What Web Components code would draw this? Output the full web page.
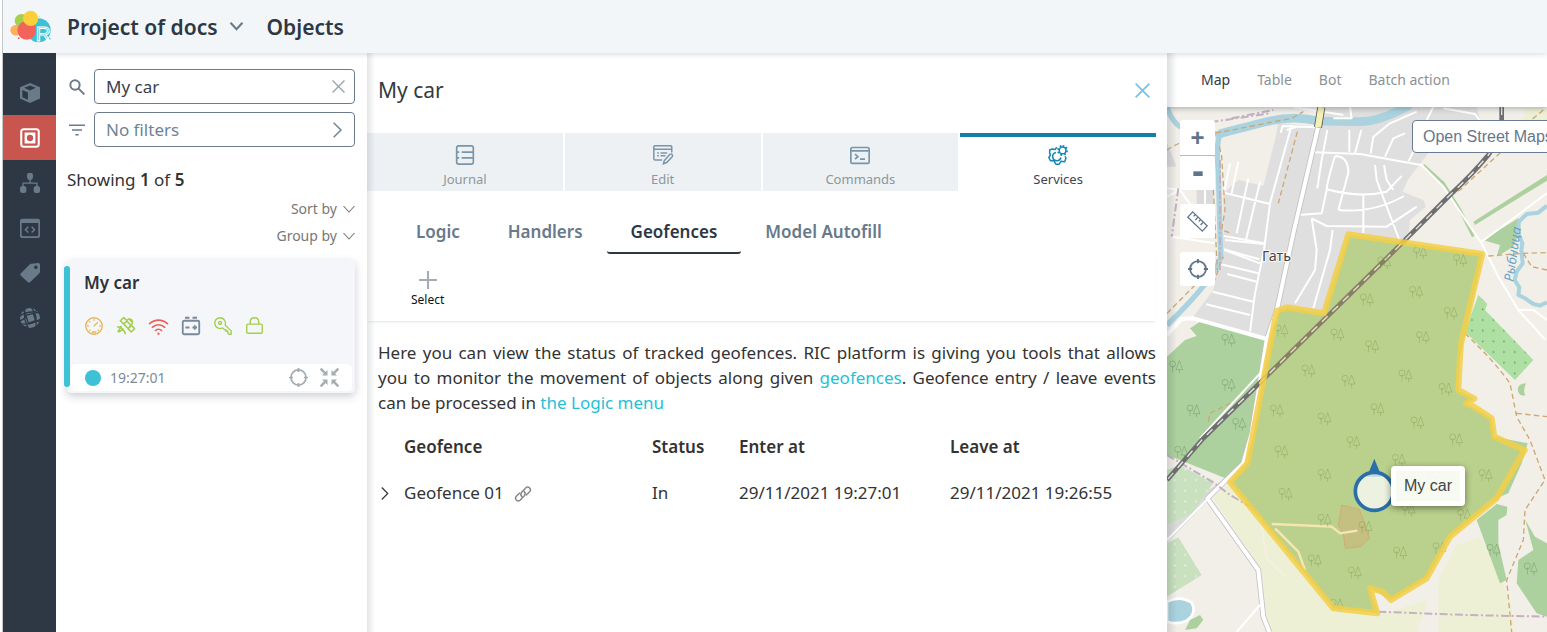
<!DOCTYPE html>
<html lang="en">
<head>
<meta charset="utf-8">
<meta name="viewport" content="width=device-width, initial-scale=1">
<title>Project of docs - Objects</title>
<style>
  html, body {
    height: 100%;
    margin: 0;
  }

  body {
    --ink: #333a41;
    --muted: #6b7b8c;
    --pale: #a3adb2;
    --teal: #3ec1d5;
    --bar: #f3f6f9;
    font-family: "Noto Sans", "Open Sans", sans-serif;
    font-size: 17px;
    color: var(--ink);
    background: #fff;
  }
</style>
</head>
<body>
<ric-app></ric-app>

<script>
const ICONS = {
  cube: '<path fill="currentColor" fill-rule="evenodd" d="M12 0 24 5v13.500L12 24 0 18.500V5zM12 3 5 5.800 12 9l7-3.200zM2.800 8.500v8.700L9.500 20v-8.600z"/>',
  object: '<rect x="1.500" y="1.500" width="21" height="21" rx="3" fill="none" stroke="currentColor" stroke-width="2.500"/><path fill="currentColor" fill-rule="evenodd" d="M5.500 5.500h13v13h-13zM12 8.200a3.800 3.800 0 1 0 0 7.600 3.800 3.800 0 0 0 0-7.600z"/>',
  tree: '<g fill="currentColor"><path d="M8.500 2.200Q8.500 0 10.500 0h3q2 0 2 2.200v3q0 2-2.200 3.300H10.700Q8.500 7.200 8.500 5.200z"/><path d="M11.200 8h1.600v3.300h7.400q1 0 1 1V16h-1.600v-3H4.400v3H2.800v-3.700q0-1 1-1h7.400z"/><rect y="15.500" width="7.600" height="8.500" rx="3"/><rect x="16.400" y="15.500" width="7.600" height="8.500" rx="3"/></g>',
  code: '<path fill="currentColor" fill-rule="evenodd" d="M2.500 1h19Q24 1 24 3.500v18q0 2.500-2.500 2.500h-19Q0 24 0 21.500v-18Q0 1 2.500 1zM2 6v14.500Q2 22 3.500 22h17q1.500 0 1.500-1.500V6z"/><path fill="none" stroke="currentColor" stroke-width="1.800" d="M10 10.500 6.500 14l3.500 3.500M14 10.500l3.500 3.500-3.500 3.500"/>',
  tag: '<path fill="currentColor" fill-rule="evenodd" d="M13.500 1 22 0q2 0 2 2v8.500q0 1-.8 1.800L12 23q-1.200 1-2.400 0L.8 15q-1.200-1.200 0-2.400L12 1.600zM19 3a2.200 2.200 0 1 0 0 4.400A2.200 2.200 0 0 0 19 3z"/>',
  ball: '<circle cx="12" cy="12" r="12" fill="currentColor"/><g fill="none" stroke="#2d3844" stroke-width="1.600"><path d="M0 9.500Q10 2.500 23 6M1 19Q14 21 24 13.500M6 1Q3.500 13 10 24M14 0Q21.500 9 19 23M-1 15.500Q4 15 7.500 8.500L4 3M8 8.500 16 6.500 21 2M16 6.500 18.500 15l6 1M18.500 15 10 18.500 6 24M10 18.500 7 9"/></g>',
  search: '<g fill="none" stroke="currentColor" stroke-width="3"><circle cx="9" cy="9" r="7"/><path d="M14 14l9 9"/></g>',
  filter: '<path stroke="currentColor" stroke-width="2.200" d="M0 5h24M4.500 12h15M9.500 19h5"/>',
  close: '<path fill="none" stroke="currentColor" stroke-width="2.600" d="M1 1l22 22M23 1 1 23"/>',
  right: '<path fill="none" stroke="currentColor" stroke-width="2.200" d="M7 1l11 11L7 23"/>',
  down: '<path fill="none" stroke="currentColor" stroke-width="2.200" d="M1 6l11 12L23 6"/>',
  chevron: '<path fill="none" stroke="currentColor" stroke-width="4" d="M1 5l11 12L23 5"/>',
  gauge: '<g fill="none" stroke="currentColor" stroke-width="1.800"><circle cx="12" cy="12" r="11"/><path d="M11.500 12.500 17 7M12 3v2M3 12h2M21 12h-2M5.600 5.600 7 7M5.600 18.400 7 17M18.400 18.400 17 17M9 20h6"/></g>',
  satellite: '<g fill="none" stroke="currentColor" stroke-width="2" stroke-linejoin="round"><path d="M9 .8 13.500 5 9 9.500 4.500 5zM19 11l4.500 4.500L19 20l-4.500-4.500zM13 4.500l3-2 5 5-2 3.500M16 2.500q4.500 0 5 5M8.500 9l6.500 6.500 4-4L12.500 5M0 13q8 0 11.500 10M6 12l-5 8M2 20l7-4"/></g>',
  wifi: '<g fill="none" stroke="currentColor" stroke-width="2"><path d="M0 9Q12-1 24 9M3.500 13.500q8.500-7.500 17 0M7.500 17.500q4.500-4 9 0"/></g><circle cx="12" cy="21" r="1.500" fill="currentColor"/>',
  battery: '<g fill="none" stroke="currentColor" stroke-width="2.400"><rect x="1" y="5" width="22" height="18" rx="2"/><path d="M4 1h6M14 1h6M4.500 14H10M14 14h6M17 11v6"/></g>',
  key: '<g fill="none" stroke="currentColor" stroke-width="1.800" stroke-linejoin="round"><path d="M15 11q1-3-.5-6Q12 1 8 1 1 2 1 8.500 2 15 8.500 15.500l3-1L14 17h2v2h2.500v3L20 23h3v-4.500z"/><circle cx="8" cy="8" r="2"/></g>',
  lock: '<g fill="none" stroke="currentColor" stroke-width="2"><rect x="1" y="10" width="22" height="13" rx="2"/><path d="M6 10V7q0-6 6-6t6 6v3"/></g>',
  target: '<g fill="none" stroke="currentColor" stroke-width="2.200"><circle cx="12" cy="12" r="9.500"/><path d="M12 0v5M12 19v5M0 12h5M19 12h5"/></g>',
  shrink: '<g fill="none" stroke="currentColor" stroke-width="3"><path d="M.8.800 7 7M23.200.800 17 7M.8 23.200 7 17M23.200 23.200 17 17"/></g><g fill="currentColor"><path d="M9.500 2.500v7h-7zM14.500 2.500v7h7zM9.500 21.500v-7h-7zM14.500 21.500v-7h7z"/></g>',
  journal: '<g fill="none" stroke="currentColor" stroke-width="2"><rect x="2" y="1" width="20" height="22" rx="2.500"/><path d="M2 8.500h3M8 8.500h14M2 15.500h3M8 15.500h14"/></g>',
  edit: '<g fill="none" stroke="currentColor" stroke-width="1.800"><path d="M22.500 9V2.500q0-1.500-1.500-1.500H2.500Q1 1 1 2.500v14Q1 18 2.500 18H11M1 5h21.500M5 9.500h2M9 9.500h8M5 13h2M9 13h6"/><path d="M13.500 19 20 11.500q1.500-1.500 3 0 1 1.500 0 2.700L16.500 21 12.500 22.500z"/></g>',
  terminal: '<g fill="none" stroke="currentColor" stroke-width="2"><rect x="1" y="3" width="22" height="19" rx="2"/><path d="M1 7h22M6 11l3.500 3L6 17M12 17h6"/></g>',
  gears: '<g fill="none" stroke="currentColor" stroke-width="1.800"><path stroke-linejoin="round" d="M10.500 2.500 8.500 5.500 5 4.800 2 6v4l1 2-2 3 2 4 4-.3L9.500 23h4l2-3.500 4.500.5 1.500-4-1-2.500"/><path d="M9.500 9A5 5 0 1 0 15.500 15"/><circle cx="17.500" cy="6.500" r="4"/><path stroke-dasharray="2 2.320" stroke-width="2.200" d="M17.500 1a5.500 5.500 0 1 1-.1 0"/></g>',
  plus: '<path stroke="currentColor" stroke-width="2.800" d="M12 0v24M0 12h24"/>',
  minus: '<path stroke="currentColor" stroke-width="7" d="M5 13h14"/>',
  link: '<g fill="none" stroke="currentColor" stroke-width="2.200" stroke-linecap="round"><path d="M10.500 16q-3.500-3-.5-6.500L16 3q3-3 6 0 2.500 3 0 5.500L17 13.500"/><path d="M13.500 8q3.500 3 .5 6.500L8 21q-3 3-6 0-2.500-3 0-5.500L7 10.500"/></g>',
  ruler: '<g fill="none" stroke="currentColor" stroke-width="1.500"><path d="M6.500 1 23 17l-5.500 6L1 7zM9.500 4 7.500 6.200M12.500 7l-3 3.300M15.500 9.800l-2 2.200M18.500 12.700l-3 3.300"/></g>'
};

class UiIcon extends HTMLElement {
  constructor() {
    super();
    this.attachShadow({ mode: 'open' });
  }

  connectedCallback() {
    const size = this.getAttribute('size') || '20';
    this.shadowRoot.innerHTML = `
      <style>
        :host { display: inline-flex; flex: none; }
        svg { display: block; overflow: visible; }
      </style>
      <svg width="${size}" height="${size}" viewBox="0 0 24 24" aria-hidden="true">${ICONS[this.getAttribute('name')]}</svg>
    `;
  }
}
customElements.define('ui-icon', UiIcon);

class AppHeader extends HTMLElement {
  constructor() {
    super();
    this.attachShadow({ mode: 'open' });
    this.shadowRoot.innerHTML = `
      <style>
        :host {
          display: flex;
          align-items: center;
          height: 53px;
          padding: 0 7px;
          background: var(--bar);
          box-shadow: 0 1px 6px rgba(45, 56, 68, .2);
          position: relative;
          z-index: 3;
        }
        svg { width: 41px; height: 33px; overflow: visible; }
        button, h1 {
          font-family: inherit;
          font-size: 21px;
          line-height: 32px;
          font-weight: 600;
          color: #2d3844;
          margin: 0;
        }
        button {
          display: flex;
          align-items: center;
          gap: 12px;
          margin: 0 24px 0 16px;
          padding: 0;
          border: 0;
          background: none;
        }
        ui-icon { color: var(--muted); }
      </style>
      <svg viewBox="28 31 123 99" role="img" aria-label="RIC">
        <circle cx="114" cy="92" r="36" fill="#3ec1d5"/>
        <circle cx="45" cy="92" r="16" fill="#fbb15c"/>
        <circle cx="62" cy="63" r="20" fill="#a5cf4f"/>
        <circle cx="78" cy="92" r="28" fill="#f1635b"/>
        <circle cx="90" cy="56" r="23" fill="#fdd039"/>
        <circle cx="116" cy="50" r="2" fill="#fdd039"/>
        <circle cx="54" cy="116" r="3" fill="#f1635b"/>
        <circle cx="147" cy="117" r="3" fill="#3ec1d5"/>
        <text x="105" y="125" font-family="Liberation Sans, sans-serif" font-size="62" fill="none" stroke="#fff" stroke-width="3">R</text>
      </svg>
      <button type="button">Project of docs <ui-icon name="chevron" size="13"></ui-icon></button>
      <h1>Objects</h1>
    `;
  }
}
customElements.define('app-header', AppHeader);

class SideNav extends HTMLElement {
  constructor() {
    super();
    this.attachShadow({ mode: 'open' });
    const items = [
      ['cube', 'Models'], ['object', 'Objects'], ['tree', 'Structure'],
      ['code', 'Code'], ['tag', 'Tags'], ['ball', 'Geofences']
    ];
    this.shadowRoot.innerHTML = `
      <style>
        :host {
          display: block;
          width: 53px;
          background: #2d3844;
        }
        nav {
          display: flex;
          flex-direction: column;
          padding-top: 17px;
        }
        a {
          display: flex;
          align-items: center;
          justify-content: center;
          height: 45px;
          color: #6b7a89;
        }
        a.active {
          background: #c9554f;
          color: #fff;
        }
      </style>
      <nav>
        ${items.map(([icon, label]) => `<a href="#${icon}" aria-label="${label}"${icon === 'object' ? ' class="active"' : ''}><ui-icon name="${icon}" size="20"></ui-icon></a>`).join('')}
      </nav>
    `;
  }
}
customElements.define('side-nav', SideNav);

class ObjectCard extends HTMLElement {
  constructor() {
    super();
    this.attachShadow({ mode: 'open' });
    this.shadowRoot.innerHTML = `
      <style>
        :host {
          display: block;
          margin-left: 11px;
          border-radius: 4px;
          background: #f5f6f9;
          box-shadow: 0 3px 9px rgba(45, 56, 68, .25);
          position: relative;
        }
        :host::before {
          content: "";
          position: absolute;
          left: -3px;
          top: 6px;
          bottom: 6px;
          width: 6px;
          border-radius: 3px;
          background: var(--teal);
        }
        h2 {
          margin: 0;
          padding: 11px 17px 0;
          font-size: 17px;
          line-height: 24px;
          font-weight: 600;
          color: #2d3239;
        }
        .status {
          display: flex;
          gap: 14px;
          padding: 22px 18px 28px;
        }
        .foot {
          display: flex;
          align-items: center;
          height: 27px;
          margin: 0 3px 0 4px;
          padding: 0 13px 0 14px;
          border-radius: 5px;
          background: #fff;
          border-bottom: 2px solid #f5f6f9;
        }
        .dot {
          width: 16px;
          height: 16px;
          margin-right: 9px;
          border-radius: 50%;
          background: var(--teal);
        }
        time {
          flex: 1;
          font-size: 14px;
          color: #7b8b95;
        }
        button {
          display: flex;
          margin-left: 12px;
          padding: 0;
          border: 0;
          background: none;
          color: var(--pale);
        }
      </style>
      <h2><slot name="title"></slot></h2>
      <div class="status">
        <ui-icon name="gauge" size="18" style="color:#eab354"></ui-icon>
        <ui-icon name="satellite" size="18" style="color:#a3cf4e"></ui-icon>
        <ui-icon name="wifi" size="19" style="color:#ea6055"></ui-icon>
        <ui-icon name="battery" size="18" style="color:#77899b"></ui-icon>
        <ui-icon name="key" size="18" style="color:#a3cf4e"></ui-icon>
        <ui-icon name="lock" size="17" style="color:#a3cf4e"></ui-icon>
      </div>
      <div class="foot">
        <span class="dot"></span>
        <time><slot name="time"></slot></time>
        <button type="button" aria-label="Show on map"><ui-icon name="target" size="19"></ui-icon></button>
        <button type="button" aria-label="Collapse"><ui-icon name="shrink" size="19"></ui-icon></button>
      </div>
    `;
  }
}
customElements.define('object-card', ObjectCard);

class ObjectList extends HTMLElement {
  constructor() {
    super();
    this.attachShadow({ mode: 'open' });
    this.shadowRoot.innerHTML = `
      <style>
        :host {
          display: block;
          padding: 16px 12px 0 0;
          box-sizing: border-box;
        }
        .row {
          display: flex;
          align-items: center;
          margin: 0 0 8px 13px;
        }
        .row > label, .row > ui-icon {
          display: flex;
          width: 25px;
          color: var(--muted);
        }
        .field {
          flex: 1;
          display: flex;
          align-items: center;
          justify-content: space-between;
          min-width: 0;
          height: 35px;
          box-sizing: border-box;
          padding: 0 9px 0 11px;
          border: 1px solid var(--muted);
          border-radius: 4px;
          background: #fff;
          font-family: inherit;
          font-size: 17px;
          line-height: 24px;
          color: #6d8496;
        }
        input {
          flex: 1;
          min-width: 0;
          padding: 0;
          border: 0;
          outline: 0;
          background: none;
          font: inherit;
          color: #39414b;
        }
        .clear {
          display: flex;
          padding: 0;
          border: 0;
          background: none;
          color: #9aa7ac;
        }
        p {
          margin: 21px 0 3px 11px;
          font-size: 17px;
          line-height: 24px;
          color: #333;
        }
        b { font-weight: 600; }
        .sort {
          display: flex;
          flex-direction: column;
          align-items: flex-end;
          margin-bottom: 11px;
        }
        .sort button {
          display: flex;
          align-items: center;
          gap: 6px;
          height: 27px;
          padding: 0;
          border: 0;
          background: none;
          font-family: inherit;
          font-size: 14px;
          line-height: 20px;
          color: #777;
        }
      </style>
      <div class="row">
        <label for="search" aria-label="Search"><ui-icon name="search" size="16"></ui-icon></label>
        <div class="field">
          <input id="search" type="text" value="My car">
          <button class="clear" type="button" aria-label="Clear"><ui-icon name="close" size="13"></ui-icon></button>
        </div>
      </div>
      <div class="row">
        <ui-icon name="filter" size="16"></ui-icon>
        <button class="field" type="button">No filters <ui-icon name="right" size="16"></ui-icon></button>
      </div>
      <p>Showing <b>1</b> of <b>5</b></p>
      <div class="sort">
        <button type="button">Sort by <ui-icon name="down" size="12"></ui-icon></button>
        <button type="button">Group by <ui-icon name="down" size="12"></ui-icon></button>
      </div>
      <slot></slot>
    `;
  }
}
customElements.define('object-list', ObjectList);

class TabButton extends HTMLElement {
  constructor() {
    super();
    this.attachShadow({ mode: 'open' });
  }

  connectedCallback() {
    this.shadowRoot.innerHTML = `
      <style>
        :host { display: block; }
        button {
          display: flex;
          flex-direction: column;
          align-items: center;
          gap: 5px;
          width: 100%;
          height: 58px;
          padding: 8px 0 0;
          border: 0;
          border-top: 4px solid #edf1f4;
          background: #edf1f4;
          font-family: inherit;
          font-size: 13px;
          line-height: 18px;
          color: #8a979d;
        }
        ui-icon { color: #7896aa; }
        :host([active]) button {
          background: #fff;
          border-color: #127ea9;
          color: #3c4650;
        }
        :host([active]) ui-icon { color: #1189b4; }
      </style>
      <button type="button" role="tab" aria-selected="${this.hasAttribute('active')}">
        <ui-icon name="${this.getAttribute('icon')}" size="20"></ui-icon>
        <slot></slot>
      </button>
    `;
  }
}
customElements.define('tab-button', TabButton);

class GeofenceTable extends HTMLElement {
  constructor() {
    super();
    this.attachShadow({ mode: 'open' });
    this.shadowRoot.innerHTML = `
      <style>
        :host { display: block; }
        table {
          width: 100%;
          border-collapse: collapse;
          table-layout: fixed;
          font-size: 17px;
          line-height: 24px;
          color: #333;
        }
        th, td {
          height: 46px;
          padding: 0;
          text-align: left;
          font-weight: 400;
        }
        th { font-weight: 600; }
        .toggle { width: 26px; }
        .name { width: 248px; }
        .state { width: 87px; }
        .enter { width: 211px; }
        button {
          display: flex;
          padding: 0;
          border: 0;
          background: none;
          color: #333;
        }
        a {
          display: inline-flex;
          margin-left: 7px;
          vertical-align: middle;
          color: #888;
        }
      </style>
      <table>
        <thead>
          <tr>
            <th class="toggle"></th>
            <th class="name">Geofence</th>
            <th class="state">Status</th>
            <th class="enter">Enter at</th>
            <th>Leave at</th>
          </tr>
        </thead>
        <tbody>
          <tr>
            <td><button type="button" aria-label="Expand"><ui-icon name="right" size="13"></ui-icon></button></td>
            <td>Geofence 01 <a href="#geofence-01" aria-label="Open geofence"><ui-icon name="link" size="16"></ui-icon></a></td>
            <td>In</td>
            <td>29/11/2021 19:27:01</td>
            <td>29/11/2021 19:26:55</td>
          </tr>
        </tbody>
      </table>
    `;
  }
}
customElements.define('geofence-table', GeofenceTable);

class DetailPanel extends HTMLElement {
  constructor() {
    super();
    this.attachShadow({ mode: 'open' });
    this.shadowRoot.innerHTML = `
      <style>
        :host {
          display: block;
          padding-right: 11px;
          position: relative;
          box-sizing: border-box;
        }
        :host::before {
          content: "";
          position: absolute;
          inset: 0 auto 0 0;
          width: 8px;
          background: linear-gradient(to right, rgba(45, 56, 68, .13), rgba(45, 56, 68, 0));
        }
        .title {
          display: flex;
          align-items: center;
          justify-content: space-between;
          height: 80px;
          padding: 0 6px 6px 11px;
          box-sizing: border-box;
        }
        h2 {
          margin: 0;
          font-size: 21px;
          line-height: 32px;
          font-weight: 400;
        }
        button {
          padding: 0;
          border: 0;
          background: none;
          font-family: inherit;
        }
        .close { display: flex; color: #6fc3e8; }
        .tabs {
          display: grid;
          grid-template-columns: repeat(4, 1fr);
          gap: 2px;
        }
        .subtabs {
          display: flex;
          padding: 21px 25px 0;
        }
        .subtabs button {
          height: 42px;
          padding: 0 24px;
          border-bottom: 2px solid transparent;
          border-radius: 3px;
          font-size: 17px;
          line-height: 24px;
          font-weight: 600;
          color: #68798a;
        }
        .subtabs .active {
          border-color: #2d3844;
          color: #2d3844;
        }
        .tools {
          display: flex;
          height: 67px;
          padding: 0 44px;
          box-sizing: border-box;
          box-shadow: 0 2px 2px -1px rgba(45, 56, 68, .14);
        }
        .tools button {
          display: flex;
          flex-direction: column;
          align-items: center;
          gap: 2px;
          padding-top: 17px;
          font-size: 12px;
          line-height: 18px;
          color: #111;
        }
        .tools ui-icon { color: var(--pale); }
        p {
          margin: 19px 0 9px 11px;
          font-size: 17px;
          line-height: 25px;
          text-align: justify;
          color: #333;
        }
        a {
          color: #25bfd6;
          text-decoration: none;
        }
        geofence-table { margin-left: 11px; }
      </style>
      <div class="title">
        <h2>My car</h2>
        <button class="close" type="button" aria-label="Close"><ui-icon name="close" size="15"></ui-icon></button>
      </div>
      <div class="tabs" role="tablist">
        <tab-button icon="journal">Journal</tab-button>
        <tab-button icon="edit">Edit</tab-button>
        <tab-button icon="terminal">Commands</tab-button>
        <tab-button icon="gears" active>Services</tab-button>
      </div>
      <div class="subtabs">
        <button type="button">Logic</button>
        <button type="button">Handlers</button>
        <button type="button" class="active">Geofences</button>
        <button type="button">Model Autofill</button>
      </div>
      <div class="tools">
        <button type="button"><ui-icon name="plus" size="18"></ui-icon>Select</button>
      </div>
      <p>Here you can view the status of tracked geofences. RIC platform is giving you tools that allows you to monitor the movement of objects along given <a href="#geofences">geofences</a>. Geofence entry / leave events can be processed in <a href="#logic">the Logic menu</a></p>
      <geofence-table></geofence-table>
    `;
  }
}
customElements.define('detail-panel', DetailPanel);

// positions of the wood symbols on the map
const TREES = [
  [780, 608], [900, 631], [672, 638], [768, 726], [620, 749], [872, 789], [532, 854], [788, 862], [636, 889],
  [364, 842], [445, 962], [736, 977], [565, 993], [856, 1017], [652, 1078], [350, 1082], [493, 1106], [772, 1118],
  [205, 870], [48, 950], [205, 1005], [100, 1082], [237, 1122], [63, 1206], [888, 1169], [580, 1177], [364, 1205],
  [716, 1230], [493, 1275], [976, 1276], [820, 1272], [376, 1332], [912, 1395], [493, 1410], [616, 1432], [745, 1380],
  [720, 1508], [464, 1532], [584, 1568], [530, 1665], [1112, 1556], [1000, 1500], [838, 1495]
];

class MapCanvas extends HTMLElement {
  constructor() {
    super();
    this.attachShadow({ mode: 'open' });
    this.shadowRoot.innerHTML = `
      <style>
        :host { display: block; overflow: hidden; }
        svg { display: block; width: 100%; height: 100%; }
        .road { fill: none; stroke: #fff; stroke-width: 6; stroke-linejoin: round; }
        .main { fill: none; stroke: #fff; stroke-width: 12; stroke-linejoin: round; }
        .casing { fill: none; stroke: #c4c1c0; stroke-width: 17; stroke-linejoin: round; }
        .water { fill: none; stroke: #aad3df; stroke-linejoin: round; }
        .track { fill: none; stroke: #cba872; stroke-width: 4; stroke-dasharray: 16 10; }
        .border { fill: none; stroke: #c3b0c1; stroke-width: 6; stroke-dasharray: 24 8 6 8; }
        .wood { fill: #add19e; }
      </style>
      <svg viewBox="21 171 1140 1575" preserveAspectRatio="xMinYMin slice" role="img" aria-label="Map">
        <defs>
          <g id="wood" fill="none" stroke="#4b7a3f" stroke-opacity=".38" stroke-width="2.500">
            <circle cx="-10" cy="-8" r="9"/>
            <path d="M-10-3v20M10-18 0 9h20zM10 9v11"/>
          </g>
          <pattern id="orchard" width="32" height="32" patternUnits="userSpaceOnUse">
            <rect width="32" height="32" fill="#aedfa3"/><circle cx="8" cy="10" r="2.500" fill="#629b58"/>
          </pattern>
          <pattern id="scrub" width="32" height="32" patternUnits="userSpaceOnUse">
            <rect width="32" height="32" fill="#c9e1bf"/><circle cx="12" cy="10" r="3" fill="#eaf5e2"/>
          </pattern>
        </defs>
        <rect x="21" y="171" width="1140" height="1575" fill="#f2efe9"/>

        <!-- land use -->
        <path fill="#e0dfdf" d="M355 220 475 230 495 171H950L962 212 860 240 800 315 742 392 728 425 790 450 798 470 750 510 742 590 565 550 492 790 350 783 322 870 100 800 160 720 190 560V430L235 390 310 408 345 270z"/>
        <path fill="#dcdbdb" d="M21 280 50 350 21 350zM110 420h50v90h-50zM245 1250 130 1365 21 1480V1400L160 1310z"/>
        <path fill="#edf0d5" d="M210 1300 160 1345 305 1560 325 1746H770L805 1650 655 1695 520 1675zM960 1460 890 1485 835 1590V1746H1060L1055 1670 1030 1600zM1090 171h71v90l-70 30z"/>
        <path class="wood" d="M120 815 322 870 265 1170 245 1250 210 1290 21 1215V920L75 870 110 858 90 835z"/>
        <path class="wood" d="M565 553 968 612 900 920 895 1020 943 1046 918 1060 995 1105 1003 1160 1103 1180 1085 1240 1045 1330 1020 1340 870 1460 800 1585 693 1650 630 1615 655 1690 520 1675 210 1297 262 1240 350 783 380 772 492 790z"/>
        <path class="wood" d="M940 515 1161 375V392L945 525zM968 570 1075 505 1083 540 1060 590 1010 620 1020 585zM950 1410 1010 1362 1042 1370 1040 1395 1015 1410V1480L1040 1590 1020 1600zM1096 1410 1125 1460 1161 1480V1700L1130 1690 1070 1600 1075 1530 1120 1500zM1098 1000q-28 2-24 22 4 18 22 14-8-14 2-36z"/>
        <path fill="url(#orchard)" d="M955 735 982 762 975 780 1120 930 1065 990 915 845z"/>
        <path fill="url(#scrub)" d="M21 1260 60 1245 160 1300 95 1390 21 1425zM21 1480 55 1462 125 1575 21 1640z"/>
        <path fill="#c8a27f" fill-opacity=".45" stroke="#d09a78" stroke-opacity=".8" stroke-width="3" d="M545 1365 598 1378 610 1410 628 1465 602 1490 556 1495 550 1450 535 1425z"/>

        <!-- water -->
        <path class="water" stroke-width="26" d="M750 165Q660 215 600 215T475 213Q400 195 320 215 220 240 178 252"/>
        <path class="water" stroke-width="16" d="M21 165Q25 195 50 222T178 252Q168 300 175 360L182 620Q170 680 21 825"/>
        <path class="water" stroke-width="12" d="M1161 467 1135 488 1100 492 1077 515 1073 545 1087 580 1084 600 1088 640 1070 665 1064 690 1078 712 1075 735 1095 745 1120 762 1140 767 1161 757"/>
        <path fill="#aad3df" stroke="#fff" stroke-width="8" d="M21 1655Q60 1635 95 1658 112 1690 80 1712 50 1725 21 1715z"/>
        <path class="wood" d="M75 1740 90 1710 120 1695 130 1710 110 1735z"/>

        <!-- streets -->
        <path class="road" d="M362 248 368 228 470 232M395 225 330 460 312 600 285 730 270 845M412 230 380 240M550 195 400 171M520 205 575 205 570 171M770 185 690 220 640 260 632 310M820 171 800 210M850 175 945 192 960 212M568 240V305M604 240 585 310M502 240 485 330 472 415M735 250 700 265 675 320M770 285 745 335M210 340 192 428 330 462M235 335 215 430M265 385 230 550M300 395 258 570M192 558 312 580M525 318Q500 400 500 420L485 490 415 495M525 318q40 0 40 50L535 480M500 418Q600 445 680 425L725 378M535 480Q640 490 732 438M455 505 500 528 680 530 770 470M645 345 650 390 680 470 718 570M672 345 680 390 700 420M610 435V550M455 505 470 600 465 660 405 760M518 540 510 600 460 775M193 600 300 640M195 570 310 582M192 598 298 628M183 643 295 670M202 672 290 695M158 725 280 755M138 763 270 795M21 415 60 420 110 490M60 420 21 440M35 560 165 580M135 415V500M1161 430 965 575M965 580 1015 680 1075 780 1155 868M1075 780H1120L1161 810"/>
        <path fill="none" stroke="#add19e" stroke-width="9" d="M790 345 850 400 900 480 940 560"/>
        <path class="road" d="M745 338 785 345 850 410 910 500 965 580"/>
        <path class="road" stroke-width="9" d="M462 307 600 312 745 338"/>
        <path class="casing" d="M475 228 400 550 350 783 320 870 275 1150 250 1240 142 1345 295 1560 310 1700 328 1746"/>
        <path class="main" d="M475 228 400 550 350 783 320 870 275 1150 250 1240 142 1345 295 1560 310 1700 328 1746"/>
        <path class="main" d="M21 855 65 807 100 805 320 867"/>
        <path class="road" d="M300 970 120 1165M150 1340 21 1470M300 1665 230 1746"/>
        <path fill="none" stroke="#f7e9cb" stroke-width="7" d="M335 1422 515 1430 540 1450 592 1442M345 1435 415 1505 435 1560"/>
        <path fill="none" stroke="#f5f0e0" stroke-width="6" d="M300 1400 320 1525 375 1580"/>
        <path fill="none" stroke="#555" stroke-width="24" d="M484 171 474 232"/>
        <path fill="none" stroke="#f6f0b4" stroke-width="19" d="M484 171 474 232"/>

        <!-- tracks and borders -->
        <path class="track" d="M21 300Q80 260 190 245L395 205 430 185M178 290 185 320 195 480 185 540 215 550M412 245 355 460M1150 180 1090 230 1040 290 900 420 870 435M21 790 120 690M160 420 172 660M160 700 190 620M985 618 1090 610 1161 608M1090 610 1115 650 1161 660M915 850Q1000 930 1050 1000L1070 1100 1110 1170 1155 1290 1095 1380 1090 1470 1040 1590 1055 1746M1070 1090 1161 1100M145 1115 150 1090 210 1060"/>
        <path class="border" d="M215 205 340 180M60 230 330 190M55 415 35 560M180 330V660M21 1215 160 1297 210 1335 270 1370M655 1685 920 1695 1161 1700"/>

        <!-- railway -->
        <path fill="none" stroke="#706f6f" stroke-width="14" d="M1025 171V210Q1020 270 985 315 940 370 870 435L700 605 310 988 130 1165 21 1290"/>
        <path fill="none" stroke="#e8e8e8" stroke-width="4" stroke-dasharray="24 20" d="M1025 171V210Q1020 270 985 315 940 370 870 435L700 605 310 988 130 1165 21 1290"/>

        ${TREES.map(([x, y]) => `<use href="#wood" x="${x}" y="${y}"/>`).join('')}

        <text x="306" y="632" font-family="Noto Sans, sans-serif" font-size="43" fill="#444" stroke="#fff" stroke-width="5" paint-order="stroke">Гать</text>
        <text transform="translate(1060 696) rotate(-82)" font-family="Noto Sans, sans-serif" font-style="italic" font-size="40" fill="#6ba3c4">Рыбница</text>

        <!-- geofence -->
        <path fill="#ffd73c" fill-opacity=".17" stroke="#f3cf47" stroke-opacity=".85" stroke-width="18" stroke-linejoin="round" d="M565 553 967 612 903 880 899 940 895 1020 943 1046 918 1060 945 1072 995 1105 1003 1160 1094 1200 1010 1345 870 1460 800 1585 693 1650 668 1625 630 1615 652 1690 520 1675 210 1297 262 1240 350 783 380 772 492 790z"/>

        <!-- object marker -->
        <path fill="#2a6fa8" d="M643 1226 665 1280H621z"/>
        <circle cx="643" cy="1324" r="57" fill="#fff" fill-opacity=".72" stroke="#2a6fa8" stroke-width="11"/>
      </svg>
    `;
  }
}
customElements.define('map-canvas', MapCanvas);

class MapPanel extends HTMLElement {
  constructor() {
    super();
    this.attachShadow({ mode: 'open' });
    this.shadowRoot.innerHTML = `
      <style>
        :host {
          display: flex;
          flex-direction: column;
          min-width: 0;
          overflow: hidden;
          position: relative;
        }
        :host::before {
          content: "";
          position: absolute;
          inset: 0 auto 0 0;
          width: 10px;
          background: linear-gradient(to right, rgba(45, 56, 68, .16), rgba(45, 56, 68, 0));
          z-index: 2;
        }
        nav {
          display: flex;
          align-items: center;
          gap: 27px;
          height: 52px;
          padding: 0 0 2px 34px;
          font-size: 14px;
          background: #fff;
          box-shadow: 0 1px 6px rgba(45, 56, 68, .4);
          z-index: 1;
        }
        nav a {
          color: #8a9295;
          text-decoration: none;
          white-space: nowrap;
        }
        nav a.active { color: #333a41; }
        .view {
          flex: 1;
          position: relative;
          min-height: 0;
        }
        map-canvas { height: 100%; }
        .controls {
          position: absolute;
          left: 13px;
          top: 13px;
          display: flex;
          flex-direction: column;
          gap: 14px;
        }
        .controls button {
          display: flex;
          align-items: center;
          justify-content: center;
          width: 35px;
          height: 34px;
          padding: 0;
          border: 0;
          border-radius: 3px;
          background: #fff;
          font: bold 24px/24px "Liberation Sans", sans-serif;
          color: #5f7489;
        }
        .zoom button:first-child {
          height: 36px;
          border-bottom: 1px solid #bbb;
          border-radius: 3px 3px 0 0;
        }
        select {
          position: absolute;
          left: 245px;
          top: 13px;
          width: 183px;
          height: 33px;
          padding: 0 10px;
          border: 1px solid #6b7b94;
          border-radius: 4px;
          appearance: none;
          background: #fff;
          font: 16px "Liberation Sans", sans-serif;
          color: #64788c;
        }
        .tip {
          position: absolute;
          left: 224px;
          top: 359px;
          padding: 6px 8px;
          border: 5px solid #fff;
          border-radius: 4px;
          background: rgba(255, 255, 255, .88);
          background-clip: padding-box;
          box-shadow: 0 2px 7px rgba(0, 0, 0, .45);
          font: 16px/18px "Liberation Sans", sans-serif;
          color: #444;
          white-space: nowrap;
        }
      </style>
      <nav>
        <a href="#map" class="active">Map</a>
        <a href="#table">Table</a>
        <a href="#bot">Bot</a>
        <a href="#batch">Batch action</a>
      </nav>
      <div class="view">
        <map-canvas></map-canvas>
        <div class="controls">
          <div class="zoom">
            <button type="button" aria-label="Zoom in">+</button>
            <button type="button" aria-label="Zoom out"><ui-icon name="minus" size="16"></ui-icon></button>
          </div>
          <button type="button" aria-label="Measure"><ui-icon name="ruler" size="21"></ui-icon></button>
          <button type="button" aria-label="Locate"><ui-icon name="target" size="20"></ui-icon></button>
        </div>
        <select aria-label="Map layer"><option>Open Street Maps</option></select>
        <div class="tip">My car</div>
      </div>
    `;
  }
}
customElements.define('map-panel', MapPanel);

class RicApp extends HTMLElement {
  constructor() {
    super();
    this.attachShadow({ mode: 'open' });
    this.shadowRoot.innerHTML = `
      <style>
        :host {
          display: flex;
          flex-direction: column;
          height: 100%;
          margin-left: 2px;
          border-left: 1px solid #c3c6ca;
          overflow: hidden;
        }
        main {
          flex: 1;
          display: grid;
          grid-template-columns: 53px 311px minmax(600px, 800px) minmax(380px, 1fr);
          min-height: 0;
        }
      </style>
      <app-header></app-header>
      <main>
        <side-nav></side-nav>
        <object-list>
          <object-card>
            <span slot="title">My car</span>
            <span slot="time">19:27:01</span>
          </object-card>
        </object-list>
        <detail-panel></detail-panel>
        <map-panel></map-panel>
      </main>
    `;
  }
}
customElements.define('ric-app', RicApp);
</script>
</body>
</html>
